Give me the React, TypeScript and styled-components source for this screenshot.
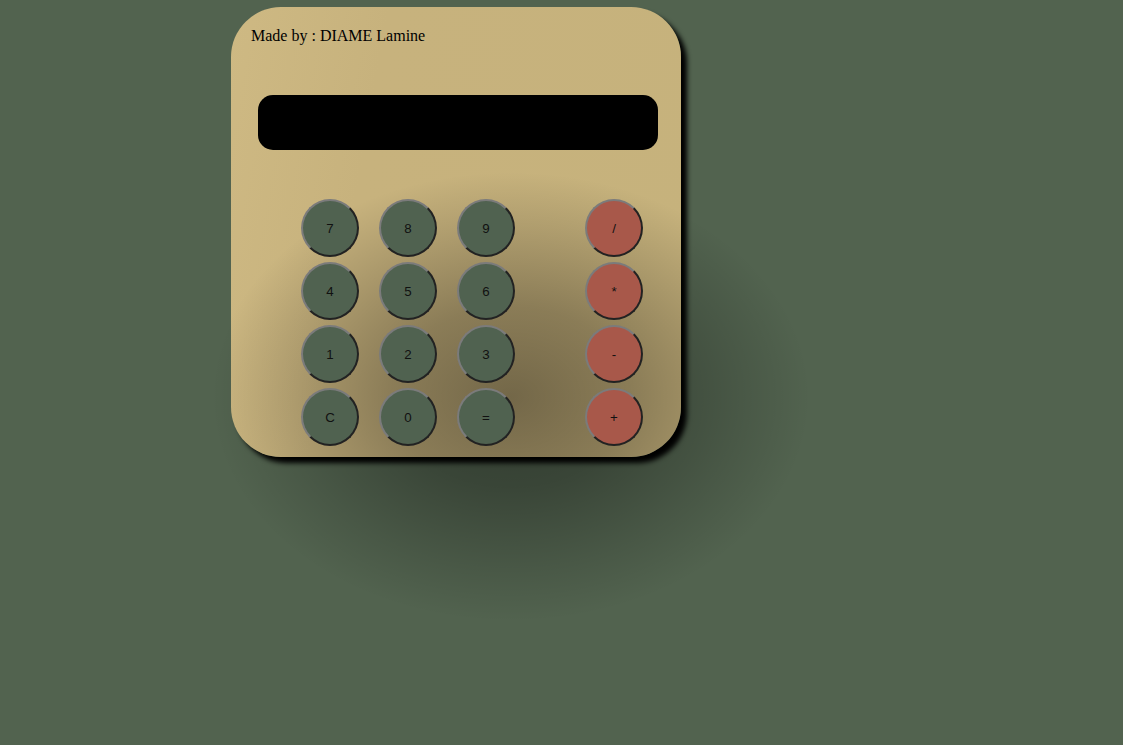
import styled, { createGlobalStyle } from 'styled-components';

const GlobalStyle = createGlobalStyle`
  html, body {
    margin: 0;
    background: #52634f;
    min-height: 100%;
  }
  body {
    height: 745px;
    overflow: hidden;
  }
`;

const digits = ['7', '8', '9', '4', '5', '6', '1', '2', '3', 'C', '0', '='];
const operators = ['/', '*', '-', '+'];

function App() {
  return (
    <>
      <GlobalStyle />
      <StyledCalculator>
        <StyledCredit>Made by : DIAME Lamine</StyledCredit>
        <StyledScreen />
        <StyledKeypad>
          <StyledDigits>
            {digits.map((d) => (
              <StyledKey key={d} $kind="digit">
                {d}
              </StyledKey>
            ))}
          </StyledDigits>
          <StyledOperators>
            {operators.map((o) => (
              <StyledKey key={o} $kind="operator">
                {o}
              </StyledKey>
            ))}
          </StyledOperators>
        </StyledKeypad>
      </StyledCalculator>
    </>
  );
}

const StyledCalculator = styled.div`
  position: relative;
  isolation: isolate;
  box-sizing: border-box;
  width: 450px;
  height: 450px;
  margin: 7px 0 0 231px;
  padding: 20px 0 0 20px;
  border-radius: 50px;
  background: linear-gradient(100deg, #ceb983 0%, #c7b27d 30%, #c6b27c 100%);
  box-shadow: 6px 6px 5px #000;

  &::before {
    content: '';
    position: absolute;
    left: -20px;
    top: 165px;
    width: 600px;
    height: 450px;
    z-index: 0;
    pointer-events: none;
    background: radial-gradient(
      ellipse closest-side at center,
      rgba(0, 0, 0, 0.42) 0%,
      rgba(0, 0, 0, 0.3) 40%,
      rgba(0, 0, 0, 0.12) 75%,
      rgba(0, 0, 0, 0) 100%
    );
  }
`;

const StyledCredit = styled.div`
  position: relative;
  z-index: 1;
  font-family: 'Liberation Serif', 'Times New Roman', serif;
  font-size: 16px;
  line-height: 18px;
  color: #000;
`;

const StyledScreen = styled.div`
  position: relative;
  z-index: 1;
  width: 400px;
  height: 55px;
  margin: 50px 0 0 7px;
  border-radius: 15px;
  background: #000;
`;

const StyledKeypad = styled.div`
  position: relative;
  z-index: 1;
  display: flex;
  gap: 70px;
  margin: 49px 0 0 50px;
`;

const StyledDigits = styled.div`
  display: grid;
  grid-template-columns: repeat(3, 58px);
  column-gap: 20px;
  row-gap: 5px;
`;

const StyledOperators = styled.div`
  display: grid;
  grid-template-columns: 58px;
  row-gap: 5px;
`;

const StyledKey = styled.button<{ $kind: 'digit' | 'operator' }>`
  box-sizing: border-box;
  width: 58px;
  height: 58px;
  padding: 0;
  border-radius: 50%;
  border: 2px solid;
  border-color: #7b7b7b #222 #222 #7b7b7b;
  background: ${(props) => (props.$kind === 'operator' ? '#a8584a' : '#506250')};
  color: #111;
  font-family: 'Liberation Sans', Arial, sans-serif;
  font-size: 13.33px;
  cursor: pointer;
`;

export default App;
